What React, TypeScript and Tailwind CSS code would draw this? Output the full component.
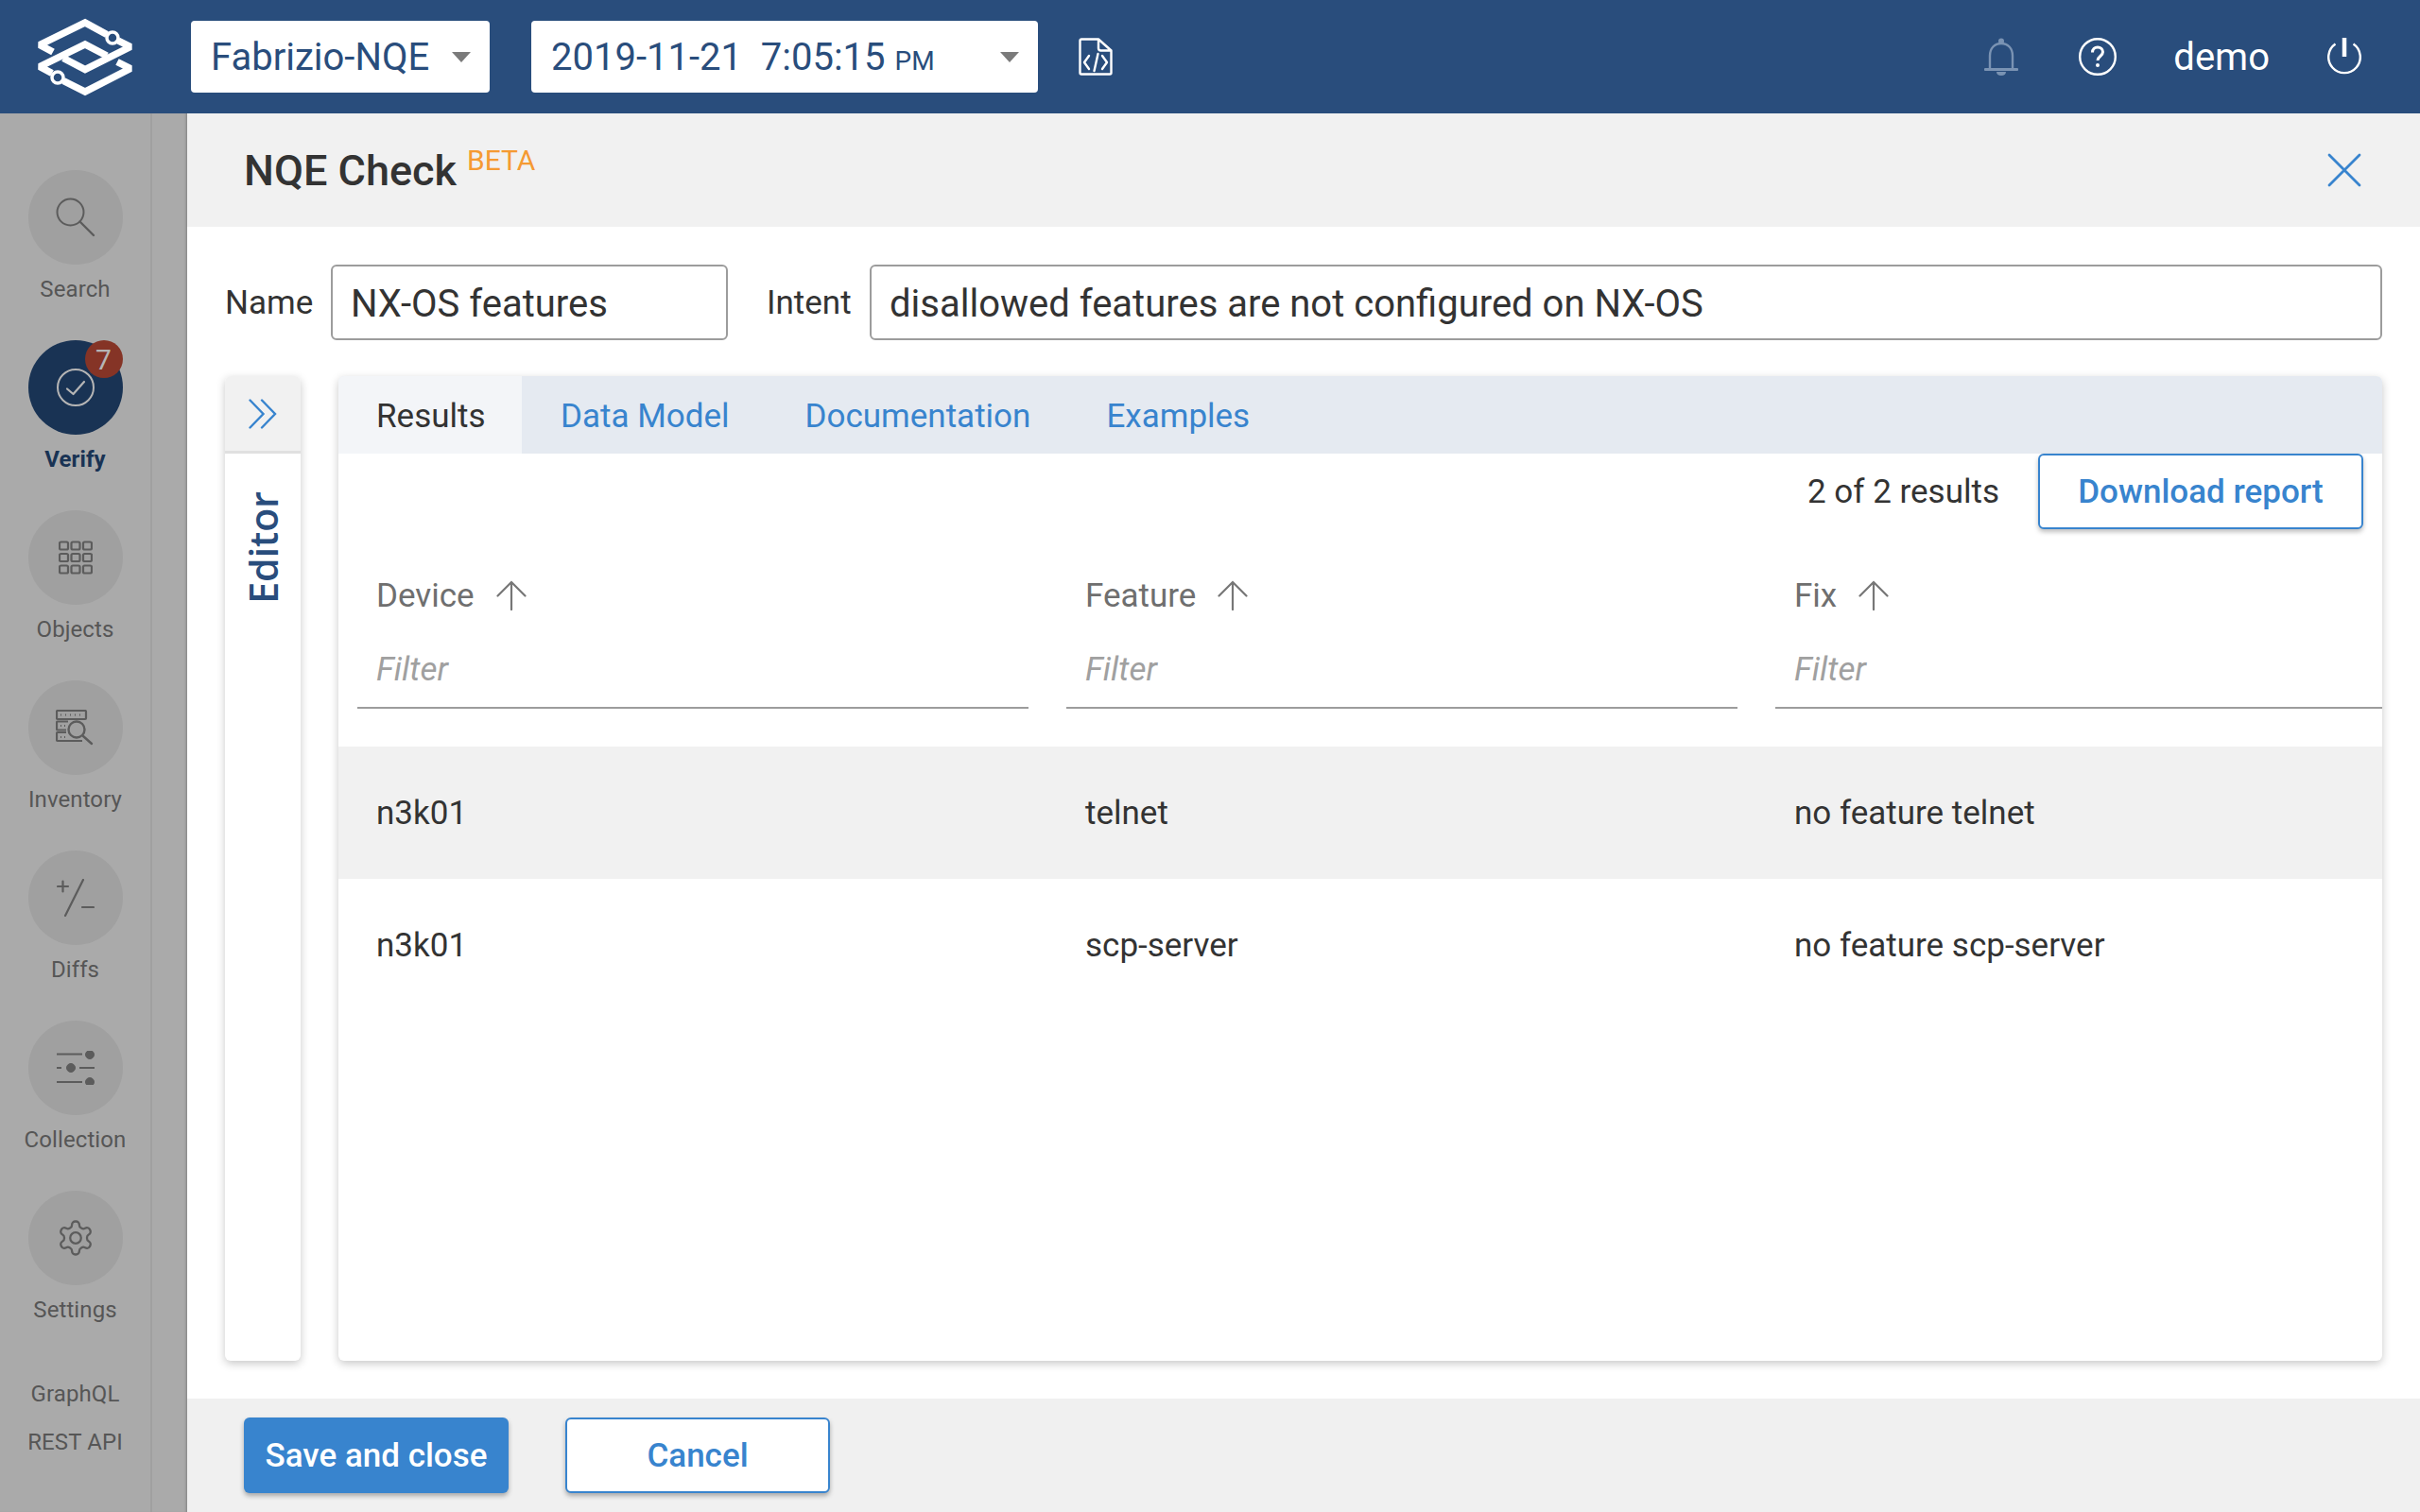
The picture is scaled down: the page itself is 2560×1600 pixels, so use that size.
import type { ReactNode } from 'react';

const NAV: { label: string; active?: boolean; badge?: string; icon: ReactNode }[] = [
  {
    label: 'Search',
    icon: (
      <svg width="42" height="42" viewBox="0 0 42 42" fill="none" stroke="#5c5c5c" strokeWidth="2">
        <circle cx="15.5" cy="15.5" r="14" />
        <path d="M25.5 25.5 40 40" strokeLinecap="round" strokeWidth="2.4" />
      </svg>
    ),
  },
  {
    label: 'Verify',
    active: true,
    badge: '7',
    icon: (
      <svg width="40" height="40" viewBox="0 0 40 40" fill="none" stroke="#b5b5b5" strokeWidth="2">
        <circle cx="20" cy="20" r="19" />
        <path d="M11 21.5 17.5 27 29 14" strokeWidth="2.2" strokeLinecap="round" strokeLinejoin="round" />
      </svg>
    ),
  },
  {
    label: 'Objects',
    icon: (
      <svg width="36" height="36" viewBox="0 0 36 36" fill="none" stroke="#5c5c5c" strokeWidth="2.2">
        {[1.5, 14, 26.5].flatMap((y) =>
          [1, 13.5, 26].map((x) => <rect key={`${x}-${y}`} x={x} y={y} width="9" height="8" rx="1.5" />),
        )}
      </svg>
    ),
  },
  {
    label: 'Inventory',
    icon: (
      <svg width="42" height="38" viewBox="0 0 42 38" fill="none" stroke="#5c5c5c">
        <path d="M2 1h29a1 1 0 0 1 1 1v7a1 1 0 0 1-1 1H2a1 1 0 0 1-1-1V2a1 1 0 0 1 1-1Z" strokeWidth="2.2" />
        <path d="M13 12.5H2a1 1 0 0 0-1 1v7a1 1 0 0 0 1 1h9M11 24H2a1 1 0 0 0-1 1v7a1 1 0 0 0 1 1h26" strokeWidth="2.2" />
        <path d="M5 5.5h1m4 0h1m4 0h1m4 0h1m4 0h1M5 17h1m3 0h1M5 29h1m3 0h1" strokeWidth="2" />
        <circle cx="22" cy="21" r="8.5" strokeWidth="2.4" />
        <path d="m29 28 9 8" strokeWidth="2.4" strokeLinecap="round" />
      </svg>
    ),
  },
  {
    label: 'Diffs',
    icon: (
      <svg width="40" height="40" viewBox="0 0 40 40" fill="none" stroke="#5c5c5c" strokeWidth="2.2" strokeLinecap="round">
        <path d="M1 8h11M6.500 2.500v11M28 1 9 39M27 30h12" />
      </svg>
    ),
  },
  {
    label: 'Collection',
    icon: (
      <svg width="40" height="36" viewBox="0 0 40 36" fill="#5c5c5c" stroke="#5c5c5c">
        <path d="M0 3.500h27M0 18h5M24 18h16M0 33h27" strokeWidth="2" fill="none" />
        <circle cx="35" cy="4" r="4.500" />
        <circle cx="15" cy="18" r="4.500" />
        <circle cx="35" cy="33" r="4.500" />
      </svg>
    ),
  },
  {
    label: 'Settings',
    icon: (
      <svg width="42" height="42" viewBox="0 0 24 24" fill="none" stroke="#5c5c5c" strokeWidth="1.3" strokeLinejoin="round">
        <path d="M12.220 2h-.440a2 2 0 0 0-2 2v.180a2 2 0 0 1-1 1.730l-.430.250a2 2 0 0 1-2 0l-.150-.080a2 2 0 0 0-2.730.730l-.220.380a2 2 0 0 0 .730 2.730l.150.100a2 2 0 0 1 1 1.720v.510a2 2 0 0 1-1 1.740l-.150.090a2 2 0 0 0-.730 2.730l.220.380a2 2 0 0 0 2.730.730l.150-.080a2 2 0 0 1 2 0l.430.250a2 2 0 0 1 1 1.730V20a2 2 0 0 0 2 2h.440a2 2 0 0 0 2-2v-.180a2 2 0 0 1 1-1.730l.430-.250a2 2 0 0 1 2 0l.150.080a2 2 0 0 0 2.730-.730l.220-.390a2 2 0 0 0-.730-2.730l-.150-.080a2 2 0 0 1-1-1.740v-.500a2 2 0 0 1 1-1.740l.150-.090a2 2 0 0 0 .730-2.730l-.220-.380a2 2 0 0 0-2.730-.730l-.150.080a2 2 0 0 1-2 0l-.430-.250a2 2 0 0 1-1-1.730V4a2 2 0 0 0-2-2z" />
        <circle cx="12" cy="12" r="3.300" />
      </svg>
    ),
  },
];

const COLUMNS = ['Device', 'Feature', 'Fix'];

const ROWS = [
  ['n3k01', 'telnet', 'no feature telnet'],
  ['n3k01', 'scp-server', 'no feature scp-server'],
];

function Logo() {
  return (
    <svg width="120" height="100" viewBox="0 0 120 100" fill="none" stroke="white" strokeWidth="7.5" strokeMiterlimit="1.5">
      <path d="M26 45 12 37.500 60 14 83 26.500" />
      <path d="M95 33 108 39.500 60 63.500 37 51.500" />
      <path d="M83 49 60 37 12 60.500 25 67.500" />
      <path d="M37 75.500 60 87 108 62.500 94 55.500" />
      <circle cx="89" cy="30" r="6" strokeWidth="3.500" fill="#294d7c" />
      <circle cx="31" cy="72" r="6" strokeWidth="3.500" fill="#294d7c" />
    </svg>
  );
}

function Caret() {
  return <span className="w-0 h-0 border-x-[10px] border-x-transparent border-t-[11px] border-t-[#7b7b7b]" />;
}

function ArrowUp() {
  return (
    <svg width="32" height="32" viewBox="0 0 32 32" fill="none" stroke="#777777" strokeWidth="2.2" strokeLinecap="round">
      <path d="M16 2v29M1.500 16.500 16 2l14.500 14.500" />
    </svg>
  );
}

function Sidebar() {
  return (
    <div className="w-[198px] shrink-0 bg-[#aaaaaa] flex shadow-[inset_-3px_0_3px_-2px_rgba(0,0,0,0.25)]">
      <div className="w-[161px] shrink-0 border-r-2 border-r-[#a0a0a0] flex flex-col items-center pt-[60px]">
        {NAV.map((n) => (
          <div key={n.label} className="h-[180px] shrink-0 w-full flex flex-col items-center">
            <div className={`relative w-[100px] h-[100px] rounded-full flex items-center justify-center ${n.active ? 'bg-[#193354]' : 'bg-[#a0a0a0]'}`}>
              {n.icon}
              {n.badge && (
                <span className="absolute top-0 right-0 w-[40px] h-[40px] rounded-full bg-[#853426] text-[#b5b5b5] text-[30px] flex items-center justify-center">
                  {n.badge}
                </span>
              )}
            </div>
            <span className={`mt-[12px] text-[24px] leading-[28px] tracking-[0.1px] ${n.active ? 'font-bold text-[#193354]' : 'text-[#565656]'}`}>{n.label}</span>
          </div>
        ))}
        <span className="mt-[21px] text-[24px] leading-[28px] tracking-[0.1px] text-[#565656]">GraphQL</span>
        <span className="mt-[23px] text-[24px] leading-[28px] tracking-[0.1px] text-[#565656]">REST API</span>
      </div>
    </div>
  );
}

function Header() {
  return (
    <header className="h-[120px] shrink-0 bg-[#294d7c] flex items-center relative z-10">
      <div className="ml-[30px] w-[120px] flex"><Logo /></div>
      <div className="ml-[52px] w-[316px] h-[76px] bg-white rounded-[4px] flex items-center justify-between pl-[21px] pr-[20px] text-[40px] text-[#294d7c]">
        <span className="pt-[2px]">Fabrizio-NQE</span>
        <Caret />
      </div>
      <div className="ml-[44px] w-[536px] h-[76px] bg-white rounded-[4px] flex items-center justify-between pl-[21px] pr-[20px] text-[#294d7c]">
        <span className="pt-[2px] text-[40px] whitespace-pre">2019-11-21  7:05:15 <span className="text-[28px]">PM</span></span>
        <Caret />
      </div>
      <svg className="ml-[43px]" width="36" height="40" viewBox="0 0 36 40" fill="none" stroke="white" strokeWidth="2.4" strokeLinejoin="round" strokeLinecap="round">
        <path d="M21 1.500H3a1.500 1.500 0 0 0-1.500 1.500v34A1.500 1.500 0 0 0 3 38.500h30a1.500 1.500 0 0 0 1.500-1.500V13.500L21 1.500Zm0 0V11a2.500 2.500 0 0 0 2.500 2.500h11" />
        <path d="M11 19 6 26l5 7M25 19l5 7-5 7M20.500 17l-4 18" />
      </svg>
      <div className="ml-auto flex items-center">
        <svg width="36" height="40" viewBox="0 0 36 40" fill="none" stroke="#7a93b3" strokeWidth="2.400">
          <path d="M6 33V19C6 11 11 6 18 6s12 5 12 13v14" />
          <path d="M1 33.500h34" strokeWidth="2.800" strokeLinecap="round" />
          <circle cx="18" cy="3.500" r="3" fill="#7a93b3" stroke="none" />
          <path d="M13 36h10c0 2.500-2 4-5 4s-5-1.500-5-4Z" fill="#7a93b3" stroke="none" />
        </svg>
        <svg className="ml-[64px]" width="40" height="40" viewBox="0 0 40 40" fill="none" stroke="white" strokeWidth="2.400">
          <circle cx="20" cy="20" r="18.800" />
          <path d="M14.500 15.500c0-3.500 2.500-5.500 5.500-5.500s5.500 2 5.500 5c0 4.500-5.500 4.500-5.500 9" strokeWidth="3" />
          <circle cx="20" cy="29" r="2" fill="white" stroke="none" />
        </svg>
        <span className="ml-[60px] pt-[2px] text-[40px] text-white">demo</span>
        <svg className="ml-[61px] mr-[62px]" width="36" height="40" viewBox="0 0 36 40" fill="none" stroke="white" strokeWidth="2.400">
          <path d="M8.500 6.500a16.800 16.800 0 1 0 19 0" />
          <path d="M18 0v20" strokeWidth="4.500" />
        </svg>
      </div>
    </header>
  );
}

function ResultsTable() {
  return (
    <div className="flex-1 flex flex-col">
      <div className="h-[80px] flex items-center justify-end pr-[20px]">
        <span className="pt-[3px] text-[35px] text-[#333333] mr-[41px]">2 of 2 results</span>
        <button className="pt-[3px] w-[344px] h-[80px] rounded-[6px] border-2 border-[#3884ce] bg-white text-[35px] font-medium text-[#3884ce] shadow-[0_3px_5px_rgba(0,0,0,0.25)]">
          Download report
        </button>
      </div>
      <div className="grid grid-cols-[710px_710px_1fr] gap-x-[40px] pl-[20px] mt-[30px]">
        {COLUMNS.map((c) => (
          <div key={c} className="h-[160px] border-b-2 border-b-[#9c9c9c] pl-[20px]">
            <div className="h-[80px] flex items-center gap-[23px] text-[35px] text-[#6f6f6f]">
              <span className="pt-[3px]">{c}</span>
              <ArrowUp />
            </div>
            <div className="text-[35px] leading-[40px] mt-[19px] italic text-[#a0a0a0]">Filter</div>
          </div>
        ))}
      </div>
      <div className="mt-[40px]">
        {ROWS.map((r, i) => (
          <div key={r[1]} className={`h-[140px] pt-[3px] grid grid-cols-[750px_750px_1fr] pl-[40px] items-center text-[35px] text-[#333333] ${i === 0 ? 'bg-[#f1f1f1]' : ''}`}>
            {r.map((v, j) => <span key={j}>{v}</span>)}
          </div>
        ))}
      </div>
    </div>
  );
}

export default function App() {
  return (
    <div className="w-[2560px] h-[1600px] flex flex-col overflow-hidden bg-white font-['Roboto',sans-serif]">
      <Header />
      <div className="flex-1 flex min-h-0">
        <Sidebar />
        <main className="flex-1 flex flex-col min-w-0 bg-white">
          <div className="h-[120px] shrink-0 bg-[#f1f1f1] flex items-center pl-[60px] pr-[62px]">
            <h1 className="pt-[2px] text-[45px] font-medium text-[#333333]">NQE Check</h1>
            <span className="ml-[11px] mb-[22px] text-[30px] text-[#f59a33]">BETA</span>
            <svg className="ml-auto" width="36" height="36" viewBox="0 0 36 36" stroke="#3884ce" strokeWidth="2.800" strokeLinecap="round">
              <path d="M2 2l32 32M34 2 2 34" />
            </svg>
          </div>

          <div className="h-[158px] shrink-0 pt-[40px] pl-[40px] pr-[40px] flex">
            <div className="flex items-center h-[80px] w-full">
              <label className="pt-[3px] text-[35px] text-[#333333] w-[112px]">Name</label>
              <input readOnly value="NX-OS features" className="w-[420px] h-[80px] rounded-[6px] border-2 border-[#9c9c9c] px-[19px] pt-[2px] text-[40px] text-[#333333] outline-none" />
              <label className="pt-[3px] ml-[41px] text-[35px] text-[#333333] w-[109px]">Intent</label>
              <input readOnly value="disallowed features are not configured on NX-OS" className="flex-1 h-[80px] rounded-[6px] border-2 border-[#9c9c9c] px-[19px] pt-[2px] text-[40px] text-[#333333] outline-none" />
            </div>
          </div>

          <div className="h-[1042px] shrink-0 flex pl-[40px] pr-[40px]">
            <div className="w-[80px] shrink-0 rounded-[6px] bg-white shadow-[0_3px_10px_rgba(0,0,0,0.22)] flex flex-col items-center overflow-hidden">
              <div className="w-full h-[82px] shrink-0 bg-[#f1f1f1] border-b-[3px] border-b-[#e0e0e0] flex items-center justify-center">
                <svg width="30" height="32" viewBox="0 0 30 32" fill="none" stroke="#3884ce" strokeWidth="2.400" strokeLinecap="round">
                  <path d="M1.500 1.500 15.500 16l-14 14.500M14 1.500 28 16 14 30.500" />
                </svg>
              </div>
              <span className="mt-[40px] text-[41px] leading-[48px] font-semibold font-['Open_Sans',sans-serif] text-[#294d7c] [writing-mode:vertical-rl] rotate-180">Editor</span>
            </div>

            <div className="ml-[40px] flex-1 flex flex-col rounded-[6px] bg-white shadow-[0_3px_10px_rgba(0,0,0,0.22)] overflow-hidden">
              <div className="h-[82px] shrink-0 bg-[#e5eaf1] flex items-center text-[35px] text-[#3884ce]">
                <div className="w-[194px] h-full bg-[#f3f5f8] flex items-center pl-[40px] pt-[4px] text-[#333333]">Results</div>
                <span className="ml-[41px] pt-[4px]">Data Model</span>
                <span className="ml-[80px] pt-[4px]">Documentation</span>
                <span className="ml-[80px] pt-[4px]">Examples</span>
              </div>
              <ResultsTable />
            </div>
          </div>

          <div className="flex-1 bg-[#f0f0f0] mt-[40px] flex items-center pl-[60px] gap-[60px]">
            <button className="pt-[3px] w-[280px] h-[80px] rounded-[6px] bg-[#3884ce] text-white text-[35px] font-medium shadow-[0_3px_5px_rgba(0,0,0,0.3)]">Save and close</button>
            <button className="pt-[3px] w-[280px] h-[80px] rounded-[6px] border-2 border-[#3884ce] bg-white text-[#3884ce] text-[35px] font-medium shadow-[0_3px_5px_rgba(0,0,0,0.3)]">Cancel</button>
          </div>
        </main>
      </div>
    </div>
  );
}
